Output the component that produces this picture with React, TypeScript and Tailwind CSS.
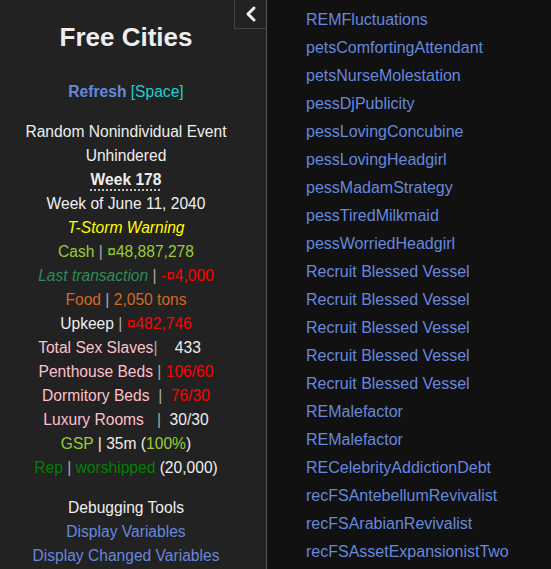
import React from 'react';

const events = [
  'REMFluctuations',
  'petsComfortingAttendant',
  'petsNurseMolestation',
  'pessDjPublicity',
  'pessLovingConcubine',
  'pessLovingHeadgirl',
  'pessMadamStrategy',
  'pessTiredMilkmaid',
  'pessWorriedHeadgirl',
  'Recruit Blessed Vessel',
  'Recruit Blessed Vessel',
  'Recruit Blessed Vessel',
  'Recruit Blessed Vessel',
  'Recruit Blessed Vessel',
  'REMalefactor',
  'REMalefactor',
  'RECelebrityAddictionDebt',
  'recFSAntebellumRevivalist',
  'recFSArabianRevivalist',
  'recFSAssetExpansionistTwo',
];

function Pipe() {
  return <span className="text-[#aaa]">|</span>;
}

export default function App() {
  return (
    <div className="flex h-[569px] w-[551px] overflow-hidden bg-[#111] font-['Liberation_Sans',Arial,sans-serif] text-base text-[#eee]">
      <aside className="relative h-full w-[267px] shrink-0 border-r border-[#555] bg-[#222]">
        <button className="absolute right-0 top-0 flex h-[29px] w-[32px] items-center justify-center border-b border-l border-[#444] bg-[#222]">
          <svg width="12" height="16" viewBox="0 0 12 16">
            <path d="M9 2 L3 8 L9 14" fill="none" stroke="#eee" strokeWidth="3" strokeLinecap="round" strokeLinejoin="round" />
          </svg>
        </button>

        <div className="flex w-[252px] flex-col items-center text-center text-[15.6px] leading-[24px]">
          <h1 className="mt-[20px] text-[26px] font-bold leading-[34px]">Free Cities</h1>

          <div className="mt-[26px]">
            <a className="font-bold text-[#68d]">Refresh</a>{' '}
            <span className="text-[#1ccfd6]">[Space]</span>
          </div>

          <div className="mt-[16px]">Random Nonindividual Event</div>
          <div>Unhindered</div>
          <div className="font-bold underline decoration-dotted underline-offset-[5px]">Week 178</div>
          <div>Week of June 11, 2040</div>
          <div className="italic text-[#ff0]">T-Storm Warning</div>
          <div className="text-[#9acd32]">
            Cash <Pipe /> ¤48,887,278
          </div>
          <div>
            <span className="italic text-[#2e8b57]">Last transaction</span> <Pipe />{' '}
            <span className="text-[#f00]">-¤4,000</span>
          </div>
          <div className="text-[#d2691e]">
            Food <Pipe /> 2,050 tons
          </div>
          <div>
            Upkeep <Pipe /> <span className="text-[#f00]">¤482,746</span>
          </div>
          <div className="whitespace-pre">
            <span className="text-[#ffc0cb]">Total Sex Slaves</span>
            <Pipe />
            {'    433   '}
          </div>
          <div>
            <span className="text-[#ffc0cb]">Penthouse Beds</span> <Pipe />{' '}
            <span className="text-[#f00]">106/60</span>
          </div>
          <div className="whitespace-pre">
            <span className="text-[#ffc0cb]">Dormitory Beds</span>
            {'  '}
            <Pipe />
            {'  '}
            <span className="text-[#f00]">76/30</span>
          </div>
          <div className="whitespace-pre">
            <span className="text-[#ffc0cb]">Luxury Rooms</span>
            {'   '}
            <Pipe />
            {'  30/30'}
          </div>
          <div>
            <span className="text-[#9acd32]">GSP</span> | 35m (<span className="text-[#9acd32]">100%</span>)
          </div>
          <div>
            <span className="text-[#008000]">Rep</span> <Pipe />{' '}
            <span className="text-[#008000]">worshipped</span> (20,000)
          </div>

          <div className="mt-[16px]">Debugging Tools</div>
          <a className="text-[#68d]">Display Variables</a>
          <a className="text-[#68d]">Display Changed Variables</a>
        </div>
      </aside>

      <main className="flex-1 pl-[39px] pt-[6px]">
        <ul className="flex flex-col">
          {events.map((e, i) => (
            <li key={i} className="leading-[28px]">
              <a className="text-[#68d]">{e}</a>
            </li>
          ))}
        </ul>
      </main>
    </div>
  );
}
